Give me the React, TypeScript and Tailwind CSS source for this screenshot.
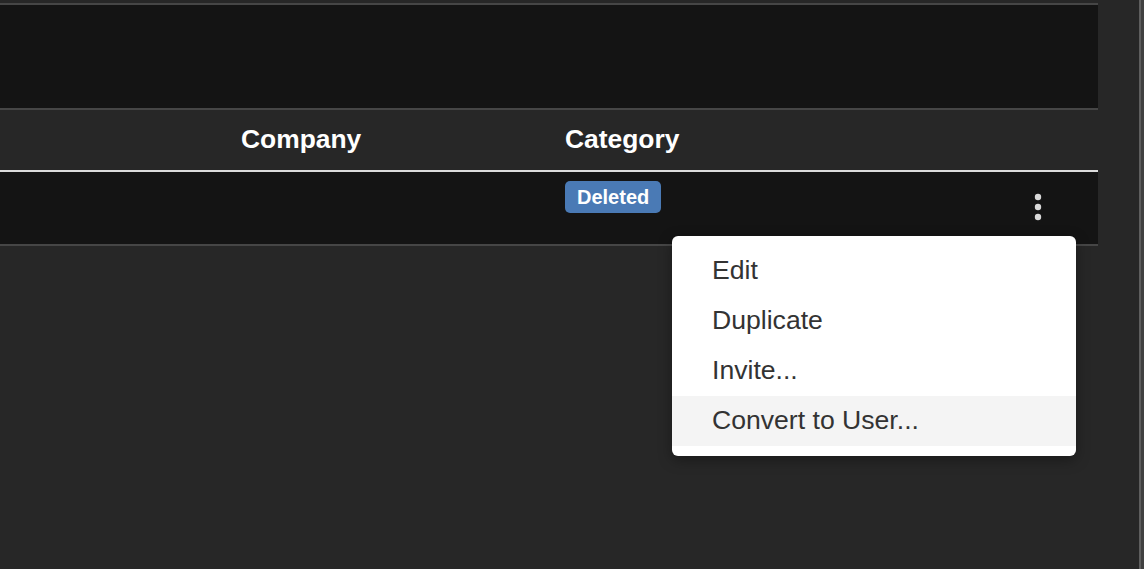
import { useState } from "react";

// Row actions shown in the kebab menu
const actions = ["Edit", "Duplicate", "Invite...", "Convert to User..."];

function KebabIcon() {
  return (
    <svg width="8" height="28" viewBox="0 0 8 28" className="block">
      <circle cx="4" cy="4" r="3.2" fill="#d9d9d9" />
      <circle cx="4" cy="14" r="3.2" fill="#d9d9d9" />
      <circle cx="4" cy="24" r="3.2" fill="#d9d9d9" />
    </svg>
  );
}

export default function App() {
  const [hovered, setHovered] = useState(3); // Convert to User... is highlighted

  return (
    <div
      className="w-[1144px] h-[569px] overflow-hidden bg-[#272727] flex"
      style={{ fontFamily: '"Liberation Sans", Arial, Helvetica, sans-serif' }}
    >
      {/* Main content */}
      <div className="w-[1098px] flex flex-col pt-[3px]">
        {/* Toolbar / filter panel */}
        <div className="h-[107px] bg-[#141414] border-y-2 border-[#464646]" />

        {/* Table header */}
        <div className="h-[62px] flex items-center border-b-2 border-[#dcdcdc] text-white font-bold text-[26.4px]">
          <div className="w-[241px]" />
          <div className="w-[324px]">Company</div>
          <div className="flex-1">Category</div>
        </div>

        {/* Table row */}
        <div className="relative h-[74px] bg-[#141414] border-b-2 border-[#464646] flex">
          <div className="w-[565px]" />
          <div className="flex-1 pt-[9px]">
            <span className="inline-flex items-center h-[32px] px-[12px] rounded-[5px] bg-[#4a7ab5] text-white font-bold text-[20px] leading-none">
              Deleted
            </span>
          </div>
          <div className="w-[64px] pt-[21px]">
            <KebabIcon />
          </div>

          {/* Actions dropdown */}
          <div className="absolute left-[672px] top-[64px] w-[404px] py-[10px] bg-white rounded-[6px] shadow-[0_4px_14px_rgba(0,0,0,0.35)] z-10">
            {actions.map((label, i) => (
              <div
                key={label}
                onMouseEnter={() => setHovered(i)}
                className={`h-[50px] flex items-center pl-[40px] text-[26.6px] text-[#333333] ${
                  hovered === i ? "bg-[#f4f4f4]" : "bg-white"
                }`}
              >
                {label}
              </div>
            ))}
          </div>
        </div>
      </div>

      {/* Scrollbar edge */}
      <div className="flex-1 flex justify-end">
        <div className="w-[5px] h-full border-l-2 border-[#5e5e5e] bg-[#404040]" />
      </div>
    </div>
  );
}
